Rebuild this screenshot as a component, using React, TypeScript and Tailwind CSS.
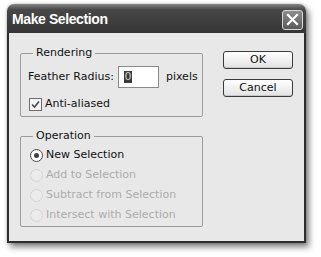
import React from 'react'

const font = { fontFamily: '"DejaVu Sans", Verdana, sans-serif' }

function Radio({ label, checked, disabled }: { label: string; checked?: boolean; disabled?: boolean }) {
  return (
    <div className="flex items-center h-[20px]">
      <span
        className={`w-[13px] h-[13px] rounded-full border flex items-center justify-center ${
          disabled ? 'border-[#d4d4d4] bg-[#ebebeb]' : 'border-[#4a4a4a] bg-white'
        }`}
      >
        {checked && <span className="w-[5px] h-[5px] rounded-full bg-[#404040]" />}
      </span>
      <span className={`ml-[3px] ${disabled ? 'text-[#acacac]' : 'text-[#111]'}`}>{label}</span>
    </div>
  )
}

function Button({ children }: { children: React.ReactNode }) {
  return (
    <div className="w-[70px] h-[18px] rounded-[3px] border border-[#3c3c3c] bg-gradient-to-b from-white to-[#e2e2e2] flex items-center justify-center text-[#111] shadow-[inset_0_-1px_0_#c8c8c8]">
      {children}
    </div>
  )
}

export default function App() {
  return (
    <div className="w-[321px] h-[257px] bg-white overflow-hidden pt-[4px] pl-[7px]" style={font}>
      <div className="w-[299px] h-[239px] flex flex-col rounded-t-[7px] shadow-[3px_4px_6px_rgba(0,0,0,0.5),0_0_3px_rgba(0,0,0,0.25)]">
        {/* title bar */}
        <div className="h-[29px] rounded-t-[7px] flex items-center justify-between pl-[5px] pr-[3px] bg-gradient-to-b from-[#858585] via-[#474747] via-[20%] to-[#363636]">
          <span
            className="text-white font-bold text-[14px] tracking-[-0.4px] pt-[2px]"
            style={{ fontFamily: '"Liberation Sans", Arial, sans-serif' }}
          >
            Make Selection
          </span>
          <div className="w-[21px] h-[20px] mt-[2px] rounded-[3px] border border-[#d8d8d8] bg-gradient-to-b from-[#8c8c8c] to-[#5a5a5a] flex items-center justify-center">
            <svg width="13" height="13" viewBox="0 0 13 13">
              <path d="M2 2 L11 11 M11 2 L2 11" stroke="white" strokeWidth="2.2" strokeLinecap="square" />
            </svg>
          </div>
        </div>

        {/* body */}
        <div className="flex-1 border-x-2 border-b-2 border-[#2e2e2e] bg-[#e8e8e8] flex pl-[11px] pt-[13px] text-[11px]">
          <div className="w-[183px] flex flex-col">
            <fieldset className="border border-[#9c9c9c] rounded-[2px] pl-[7px] pt-[6px] pb-[5px]">
              <legend className="ml-[5px] px-[3px] leading-[14px] text-[#111]">Rendering</legend>
              <div className="flex items-center h-[22px]">
                <span className="text-[#111]">Feather Radius:</span>
                <div className="ml-[4px] w-[41px] h-[22px] border border-[#8a8a8a] bg-white flex items-center pl-[5px]">
                  <span className="bg-[#3a3a3a] text-[#cfcfcf] leading-[12px] px-[0.5px]">0</span>
                </div>
                <span className="ml-[7px] text-[#111]">pixels</span>
              </div>
              <div className="flex items-center h-[14px] mt-[9px] pl-[1px]">
                <span className="w-[13px] h-[13px] border border-[#6e6e6e] bg-[#f4f4f4] flex items-center justify-center">
                  <svg width="9" height="9" viewBox="0 0 9 9">
                    <path d="M1 4.5 L3.5 7 L8 1.5" fill="none" stroke="#4a4a4a" strokeWidth="1.6" />
                  </svg>
                </span>
                <span className="ml-[3px] text-[#111]">Anti-aliased</span>
              </div>
            </fieldset>

            <fieldset className="mt-[12px] border border-[#9c9c9c] rounded-[2px] pl-[9px] pt-[2px] pb-[1px]">
              <legend className="ml-[3px] px-[3px] leading-[14px] text-[#111]">Operation</legend>
              <Radio label="New Selection" checked />
              <Radio label="Add to Selection" disabled />
              <Radio label="Subtract from Selection" disabled />
              <Radio label="Intersect with Selection" disabled />
            </fieldset>
          </div>

          <div className="ml-[20px] pt-[5px] flex flex-col gap-[10px]">
            <Button>OK</Button>
            <Button>Cancel</Button>
          </div>
        </div>
      </div>
    </div>
  )
}
